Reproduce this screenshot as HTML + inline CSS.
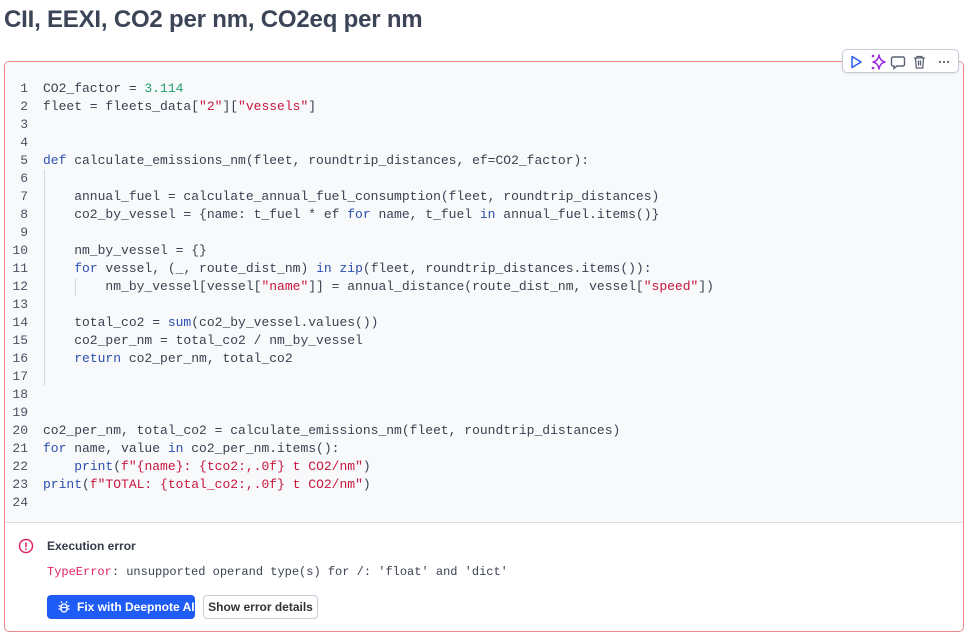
<!DOCTYPE html>
<html><head><meta charset="utf-8"><style>
*{margin:0;padding:0;box-sizing:border-box}
body{width:969px;height:634px;background:#fff;font-family:"Liberation Sans",sans-serif;position:relative;overflow:hidden;color:#2d3748}
h1{position:absolute;left:4px;top:6px;font-size:24px;line-height:28px;font-weight:700;color:#3b4557;letter-spacing:-0.2px}
.card{position:absolute;left:4px;top:61px;width:960px;height:571px;border:1px solid #e98a8a;border-radius:5px;overflow:hidden}
.code{background:#f8f9fb;height:461px;border-bottom:1px solid #d9dde5;padding-top:18px;position:relative}
.ln{font-family:"Liberation Mono",monospace;font-size:13px;line-height:18px;white-space:pre;color:#3a4150;height:18px;position:relative}
.ln .n{position:absolute;left:0;width:23px;text-align:right;color:#4a5160}
.ln .t{position:absolute;left:38px}
.k{color:#2c4fb0}.s{color:#c8163d}.num{color:#1f9c72}
.guide{position:absolute;width:1px;background:#d4d7dd}
.tb{position:absolute;left:842px;top:49px;width:117px;height:24px;background:#fff;border:1px solid #c5ccd8;border-radius:5px;box-shadow:0 1px 2px rgba(0,0,0,.08)}
.btn1{position:absolute;left:47px;top:595px;width:148px;height:24px;background:#1f5cf5;border-radius:4px;color:#fff;font-size:12px;font-weight:700;line-height:24px;padding-left:30px}
.btn2{position:absolute;left:203px;top:595px;width:115px;height:24px;border:1px solid #c8cfdb;border-radius:4px;color:#333;font-size:12px;font-weight:700;line-height:22px;text-align:center}
</style></head><body>
<h1>CII, EEXI, CO2 per nm, CO2eq per nm</h1>
<div class="card">
<div class="code">
<div class="guide" style="left:39px;top:108px;height:216px"></div>
<div class="guide" style="left:70px;top:216px;height:18px"></div>
<div class="ln"><span class="n">1</span><span class="t">CO2_factor = <span class="num">3.114</span></span></div>
<div class="ln"><span class="n">2</span><span class="t">fleet = fleets_data[<span class="s">"2"</span>][<span class="s">"vessels"</span>]</span></div>
<div class="ln"><span class="n">3</span></div>
<div class="ln"><span class="n">4</span></div>
<div class="ln"><span class="n">5</span><span class="t"><span class="k">def</span> calculate_emissions_nm(fleet, roundtrip_distances, ef=CO2_factor):</span></div>
<div class="ln"><span class="n">6</span></div>
<div class="ln"><span class="n">7</span><span class="t">    annual_fuel = calculate_annual_fuel_consumption(fleet, roundtrip_distances)</span></div>
<div class="ln"><span class="n">8</span><span class="t">    co2_by_vessel = {name: t_fuel * ef <span class="k">for</span> name, t_fuel <span class="k">in</span> annual_fuel.items()}</span></div>
<div class="ln"><span class="n">9</span></div>
<div class="ln"><span class="n">10</span><span class="t">    nm_by_vessel = {}</span></div>
<div class="ln"><span class="n">11</span><span class="t">    <span class="k">for</span> vessel, (_, route_dist_nm) <span class="k">in</span> <span class="k">zip</span>(fleet, roundtrip_distances.items()):</span></div>
<div class="ln"><span class="n">12</span><span class="t">        nm_by_vessel[vessel[<span class="s">"name"</span>]] = annual_distance(route_dist_nm, vessel[<span class="s">"speed"</span>])</span></div>
<div class="ln"><span class="n">13</span></div>
<div class="ln"><span class="n">14</span><span class="t">    total_co2 = <span class="k">sum</span>(co2_by_vessel.values())</span></div>
<div class="ln"><span class="n">15</span><span class="t">    co2_per_nm = total_co2 / nm_by_vessel</span></div>
<div class="ln"><span class="n">16</span><span class="t">    <span class="k">return</span> co2_per_nm, total_co2</span></div>
<div class="ln"><span class="n">17</span></div>
<div class="ln"><span class="n">18</span></div>
<div class="ln"><span class="n">19</span></div>
<div class="ln"><span class="n">20</span><span class="t">co2_per_nm, total_co2 = calculate_emissions_nm(fleet, roundtrip_distances)</span></div>
<div class="ln"><span class="n">21</span><span class="t"><span class="k">for</span> name, value <span class="k">in</span> co2_per_nm.items():</span></div>
<div class="ln"><span class="n">22</span><span class="t">    <span class="k">print</span>(<span class="s">f"{name}: {tco2:,.0f} t CO2/nm"</span>)</span></div>
<div class="ln"><span class="n">23</span><span class="t"><span class="k">print</span>(<span class="s">f"TOTAL: {total_co2:,.0f} t CO2/nm"</span>)</span></div>
<div class="ln"><span class="n">24</span></div>
</div>
</div>
<div class="tb">
<svg width="117" height="24" viewBox="0 0 117 24" fill="none">
<path d="M9 6.5 L18 12 L9 17.5 Z" stroke="#2a5bf0" stroke-width="1.5" stroke-linejoin="round"/>
<path d="M36 5 Q37 11 42 12 Q37 13 36 19 Q35 13 30 12 Q35 11 36 5Z" stroke="#9b28e0" stroke-width="1.5" stroke-linejoin="round"/>
<circle cx="30" cy="6" r="1.3" fill="#9b28e0"/><circle cx="30" cy="18" r="1.3" fill="#9b28e0"/>
<path d="M50 7 h10 a1.5 1.5 0 0 1 1.5 1.5 v6 a1.5 1.5 0 0 1 -1.5 1.5 h-6 l-3 2.5 v-2.5 h-1 a1.5 1.5 0 0 1 -1.5 -1.5 v-6 a1.5 1.5 0 0 1 1.5 -1.5z" stroke="#5a6272" stroke-width="1.4"/>
<path d="M71 8 h11 M74 8 v-1.5 h5 v1.5 M72.5 8 l0.8 10 h6.4 l0.8 -10 M75.5 10.5 v5 M77.5 10.5 v5" stroke="#5a6272" stroke-width="1.3"/>
<circle cx="97" cy="12" r="1.1" fill="#5a6272"/><circle cx="101" cy="12" r="1.1" fill="#5a6272"/><circle cx="105" cy="12" r="1.1" fill="#5a6272"/>
</svg></div>
<svg style="position:absolute;left:18px;top:538px" width="16" height="16" viewBox="0 0 16 16" fill="none"><circle cx="8" cy="8" r="6.5" stroke="#e0245e" stroke-width="1.5"/><path d="M8 4.5v4.5" stroke="#e0245e" stroke-width="1.6"/><circle cx="8" cy="11.2" r="0.9" fill="#e0245e"/></svg>
<div style="position:absolute;left:47px;top:539px;font-size:12px;font-weight:700;color:#333a48">Execution error</div>
<div style="position:absolute;left:47px;top:565px;font-family:'Liberation Mono',monospace;font-size:12px;color:#3a4150;white-space:pre"><span style="color:#e0245e">TypeError</span>: unsupported operand type(s) for /: 'float' and 'dict'</div>
<div class="btn1"><svg style="position:absolute;left:10px;top:5px" width="14" height="14" viewBox="0 0 14 14" fill="none" stroke="#fff" stroke-width="1.3"><rect x="4" y="4" width="6" height="8" rx="3"/><path d="M5 3 l-1-1.5 M9 3 l1-1.5 M1.5 6h2.5 M10 6h2.5 M1.5 9h2.5 M10 9h2.5 M4 7.5h6"/></svg>Fix with Deepnote AI</div>
<div class="btn2">Show error details</div>
</body></html>
